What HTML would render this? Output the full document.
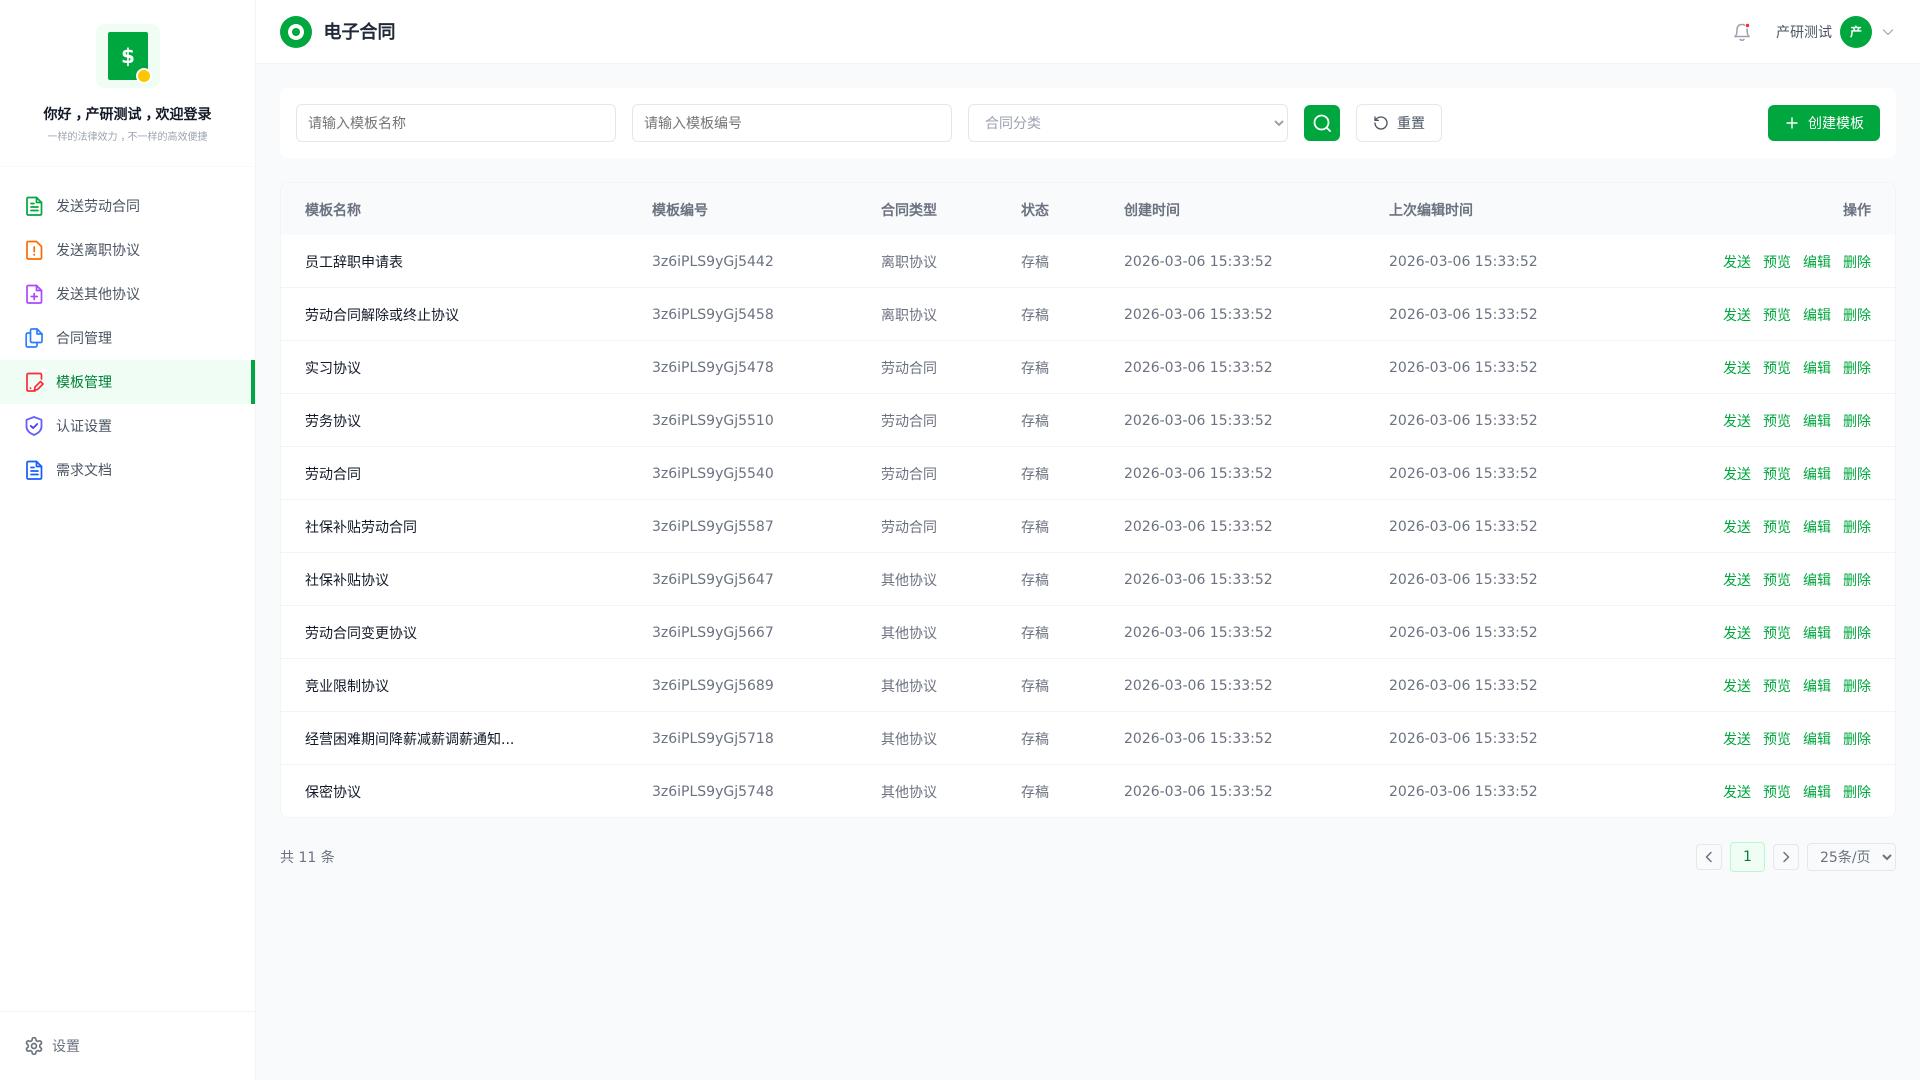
<!DOCTYPE html>
<html><head><meta charset="utf-8"><title>电子合同</title>
<style>
*{box-sizing:border-box;margin:0;padding:0}
html,body{width:1920px;height:1080px;overflow:hidden;background:#f9fafb;font-family:"DejaVu Sans","WenQuanYi Zen Hei",sans-serif;font-size:14px;color:#1f2937}
#side{position:absolute;left:0;top:0;width:256px;height:1080px;background:#fff;border-right:1px solid #f3f4f6;overflow:hidden}
.tile{position:absolute;left:96px;top:24px;width:64px;height:64px;border-radius:8px;background:#f0fdf4}
.doc{position:absolute;left:12px;top:8px;width:40px;height:48px;border-radius:2px;background:#00a63e;color:#fff;font-size:20px;font-weight:700;line-height:48px;text-align:center}
.coin{position:absolute;left:40px;top:44px;width:16px;height:16px;border-radius:50%;background:#fdc700;border:2px solid #fff}
.hi{position:absolute;left:0;width:255px;top:105px;text-align:center;font-weight:700;line-height:20px;color:#111827}
.hi span{position:relative;left:4px}
.sub{position:absolute;left:0;width:255px;top:130px;text-align:center;font-size:10px;line-height:16px;color:#9ca3af}
.sub span{position:relative;left:3px}
.sl{position:absolute;left:0;width:255px;top:166px;height:1px;background:#f9fafb}
.mi{position:absolute;left:0;width:255px;height:44px;padding-top:1px;line-height:44px;padding-left:56px;color:#4b5563;overflow:hidden}
.mi svg{position:absolute;left:24px;top:11px}
.mi.on{background:#f0fdf4;color:#008236;border-right:4px solid #00a63e;overflow:visible}
.set{position:absolute;left:0;top:1011px;width:255px;height:69px;border-top:1px solid #f3f4f6;color:#6b7280;padding:2px 0 0 52px;line-height:66px}
.set svg{position:absolute;left:24px;top:24px}
#top{position:absolute;left:256px;top:0;width:1664px;height:64px;background:#fff;border-bottom:1px solid #f3f4f6}
.lg{position:absolute;left:24px;top:16px;width:32px;height:32px;border-radius:50%;background:#00a63e}
.lg i{position:absolute;left:8px;top:8px;width:16px;height:16px;border-radius:50%;background:#fff}
.lg b{position:absolute;left:12px;top:12px;width:8px;height:8px;border-radius:50%;background:#00a63e}
.ttl{position:absolute;left:67.500px;top:19px;font-size:18px;font-weight:700;line-height:28px;color:#1f2937}
.usr{position:absolute;left:1520px;top:23px;line-height:20px;color:#4b5563}
.av{position:absolute;left:1584px;top:16px;width:32px;height:32px;border-radius:50%;background:#00a63e;color:#fff;font-size:12px;font-weight:700;line-height:32px;text-align:center}
.card{position:absolute;left:280px;top:88px;width:1616px;height:70px;background:#fff;border-radius:8px}
input,select{position:absolute;top:16px;height:38px;background:#fff;border:1px solid #e5e7eb;border-radius:6px;font:14px "DejaVu Sans","WenQuanYi Zen Hei",sans-serif;outline:0}
input{padding:2px 12px 0 11px;width:320px;color:#1f2937}
input::placeholder{color:#757575;opacity:1}
select{width:320px;padding:2px 0 0 12px;color:#9ca3af}
.sb{position:absolute;left:1024px;top:17px;width:36px;height:36px;border-radius:6px;background:#00a63e}
.sb svg{position:absolute;left:8px;top:8px}
.rs{position:absolute;left:1076px;top:16px;width:86px;height:38px;border:1px solid #e5e7eb;border-radius:6px;background:#fff;color:#4b5563;line-height:36px;padding:1px 0 0 40px}
.rs svg{position:absolute;left:16px;top:10px}
.cr{position:absolute;left:1488px;top:17px;width:112px;height:36px;border-radius:6px;background:#00a63e;color:#fff;line-height:36px;padding:1px 0 0 40px}
.cr svg{position:absolute;left:16px;top:10px}
.tw{position:absolute;left:280px;top:182px;width:1616px;height:636px;background:#fff;border:1px solid #f3f4f6;border-radius:8px;overflow:hidden}
table{width:1614px;border-collapse:separate;border-spacing:0;table-layout:fixed}
th{height:52px;background:#f9fafb;color:#6b7280;font-weight:700;text-align:left;padding:1px 24px 0}
td{height:53px;padding:2px 24px 0;color:#6b7280;border-bottom:1px solid #f3f4f6;white-space:nowrap}
tr:last-child td{border-bottom:0;padding-top:1px}
td:first-child{color:#111827}
.d{color:#6b7280}
.op{text-align:right;color:#00a63e}
.op span{margin-left:12px}
th:last-child{text-align:right}
.tot{position:absolute;left:280px;top:848px;line-height:20px;color:#6b7280}
.pb{position:absolute;top:844px;width:26px;height:26px;border:1px solid #e5e7eb;border-radius:4px;background:#f9fafb}
.pb svg{position:absolute;left:5px;top:5px}
.pc{position:absolute;left:1730px;top:842px;width:35px;height:30px;border:1px solid #b9f8cf;border-radius:4px;background:#f0fdf4;color:#008236;line-height:28px;text-align:center}
select.ps{left:1807px;top:843px;width:89px;height:28px;padding:1px 0 0 8px;color:#6b7280;background:#f9fafb;border-radius:4px}
</style></head><body>
<div id="side">
<div class="tile"><div class="doc">$</div><div class="coin"></div></div>
<div class="hi">你好<span>，</span>产研测试<span>，</span>欢迎登录</div>
<div class="sub">一样的法律效力<span>，</span>不一样的高效便捷</div>
<div class="sl"></div>
<div class="mi" style="top:184px"><svg width="20" height="22" viewBox="0 0 20 22" fill="none" stroke="#00a63e" stroke-width="1.7" stroke-linejoin="round" stroke-linecap="round"><path d="M4.500 2.500H12.500L17.500 7.500V18.500Q17.500 20 16 20H4.500Q3 20 3 18.500V4Q3 2.500 4.500 2.500Z"/><path d="M12.500 2.500V7.500H17.500"/><path d="M7 8.500H10M7 12H14M7 15.500H14"/></svg>发送劳动合同</div>
<div class="mi" style="top:228px"><svg width="20" height="22" viewBox="0 0 20 22" fill="none" stroke="#ff6900" stroke-width="1.7" stroke-linejoin="round" stroke-linecap="round"><path d="M4.500 2.500H12.500L17.500 7.500V18.500Q17.500 20 16 20H4.500Q3 20 3 18.500V4Q3 2.500 4.500 2.500Z"/><path d="M10.200 8V12.500M10.200 15.500V16"/></svg>发送离职协议</div>
<div class="mi" style="top:272px"><svg width="20" height="22" viewBox="0 0 20 22" fill="none" stroke="#ad46ff" stroke-width="1.7" stroke-linejoin="round" stroke-linecap="round"><path d="M4.500 2.500H12.500L17.500 7.500V18.500Q17.500 20 16 20H4.500Q3 20 3 18.500V4Q3 2.500 4.500 2.500Z"/><path d="M12.500 2.500V7.500H17.500"/><path d="M10.200 10.500V16.500M7.200 13.500H13.200"/></svg>发送其他协议</div>
<div class="mi" style="top:316px"><svg width="20" height="22" viewBox="0 0 20 22" fill="none" stroke="#2b7fff" stroke-width="1.7" stroke-linejoin="round" stroke-linecap="round"><path d="M8 2H13L18 7V14Q18 15.500 16.500 15.500H8Q6.500 15.500 6.500 14V3.500Q6.500 2 8 2Z"/><path d="M13 2V7H18"/><path d="M6.500 6H4Q2.200 6 2.200 8V18.500Q2.200 20 4 20H11Q13 20 13 18V15.500"/></svg>合同管理</div>
<div class="mi on" style="top:360px"><svg width="20" height="22" viewBox="0 0 20 22" fill="none" stroke="#fb2c36" stroke-width="1.7" stroke-linejoin="round" stroke-linecap="round"><path d="M11 20H4.500Q3 20 3 18.500V4Q3 2.500 4.500 2.500H16Q17.500 2.500 17.500 4V8"/><path d="M6.500 17V17.200"/><path d="M10.500 19.500L11 16L16.500 10.500L19 13L13.500 18.500Z"/></svg><svg width="10" height="10" viewBox="0 0 10 10" style="left:38px;top:6px"><path d="M5 0L6.300 3.700L10 5L6.300 6.300L5 10L3.700 6.300L0 5L3.700 3.700Z" fill="#fff"/></svg>模板管理</div>
<div class="mi" style="top:404px"><svg width="20" height="22" viewBox="0 0 20 22" fill="none" stroke="#615fff" stroke-width="1.8" stroke-linejoin="round" stroke-linecap="round"><path d="M10 2L17.500 4.800V11.500Q17.500 16.800 10 20Q2.500 16.800 2.500 11.500V4.800Z"/><path d="M6.800 11L9.200 13L13.200 9" stroke="#4f39f6"/></svg>认证设置</div>
<div class="mi" style="top:448px"><svg width="20" height="22" viewBox="0 0 20 22" fill="none" stroke="#155dfc" stroke-width="1.7" stroke-linejoin="round" stroke-linecap="round"><path d="M4.500 2.500H12.500L17.500 7.500V18.500Q17.500 20 16 20H4.500Q3 20 3 18.500V4Q3 2.500 4.500 2.500Z"/><path d="M12.500 2.500V7.500H17.500"/><path d="M7 8.500H10M7 12H14M7 15.500H14"/></svg>需求文档</div>
<div class="set"><svg width="20" height="20" viewBox="0 0 24 24" fill="none" stroke="#6b7280" stroke-width="2" stroke-linejoin="round" stroke-linecap="round"><path d="M12.220 2h-.44a2 2 0 0 0-2 2v.18a2 2 0 0 1-1 1.730l-.43.25a2 2 0 0 1-2 0l-.15-.08a2 2 0 0 0-2.730.73l-.22.38a2 2 0 0 0 .73 2.730l.15.1a2 2 0 0 1 1 1.720v.51a2 2 0 0 1-1 1.740l-.15.09a2 2 0 0 0-.73 2.730l.22.38a2 2 0 0 0 2.730.73l.15-.08a2 2 0 0 1 2 0l.43.25a2 2 0 0 1 1 1.730V20a2 2 0 0 0 2 2h.44a2 2 0 0 0 2-2v-.18a2 2 0 0 1 1-1.730l.43-.25a2 2 0 0 1 2 0l.15.08a2 2 0 0 0 2.730-.73l.22-.39a2 2 0 0 0-.73-2.730l-.15-.08a2 2 0 0 1-1-1.740v-.5a2 2 0 0 1 1-1.740l.15-.09a2 2 0 0 0 .73-2.730l-.22-.38a2 2 0 0 0-2.730-.73l-.15.08a2 2 0 0 1-2 0l-.43-.25a2 2 0 0 1-1-1.730V4a2 2 0 0 0-2-2z"/><circle cx="12" cy="12" r="3"/></svg>设置</div>
</div>
<div id="top">
<div class="lg"><i></i><b></b></div><div class="ttl">电子合同</div>
<svg style="position:absolute;left:1475px;top:21px" width="22" height="22" viewBox="0 0 22 22" fill="none" stroke="#9ca3af" stroke-width="1.500" stroke-linecap="round" stroke-linejoin="round"><path d="M4 15.500Q6 14 6 9Q6 3.500 11 3.500Q12.500 3.500 13.500 4M16 8Q16 14 18 15.500"/><path d="M4 15.500H18"/><path d="M9 18.500Q11 20 13 18.500"/><circle cx="16.500" cy="4.500" r="1.700" fill="#fb2c36" stroke="none"/></svg>
<div class="usr">产研测试</div><div class="av">产</div>
<svg style="position:absolute;left:1626px;top:26px" width="12" height="12" viewBox="0 0 12 12" fill="none" stroke="#9ca3af" stroke-width="1.200" stroke-linecap="round" stroke-linejoin="round"><path d="M1.500 4L6 8.500L10.500 4"/></svg>
</div>
<div class="card">
<input style="left:16px" placeholder="请输入模板名称">
<input style="left:352px" placeholder="请输入模板编号">
<select style="left:688px"><option>合同分类</option></select>
<div class="sb"><svg width="20" height="20" viewBox="0 0 20 20" fill="none" stroke="#fff" stroke-width="1.800" stroke-linecap="round"><circle cx="9.500" cy="9.500" r="7"/><path d="M14.500 14.500L18 18"/></svg></div>
<div class="rs"><svg width="16" height="16" viewBox="0 0 24 24" fill="none" stroke="#4b5563" stroke-width="2" stroke-linecap="round" stroke-linejoin="round"><path d="M3 12a9 9 0 1 0 9-9 9.750 9.750 0 0 0-6.740 2.740L3 8"/><path d="M3 3v5h5"/></svg>重置</div>
<div class="cr"><svg width="16" height="16" viewBox="0 0 16 16" fill="none" stroke="#fff" stroke-width="1.400" stroke-linecap="round"><path d="M8 3V13M3 8H13"/></svg>创建模板</div>
</div>
<div class="tw"><table>
<colgroup><col style="width:347px"><col style="width:229px"><col style="width:140px"><col style="width:103px"><col style="width:265px"><col style="width:300px"><col style="width:230px"></colgroup>
<thead><tr><th>模板名称</th><th>模板编号</th><th>合同类型</th><th>状态</th><th>创建时间</th><th>上次编辑时间</th><th>操作</th></tr></thead>
<tbody>
<tr><td>员工辞职申请表</td><td>3z6iPLS9yGj5442</td><td>离职协议</td><td>存稿</td><td class="d">2026-03-06 15:33:52</td><td class="d">2026-03-06 15:33:52</td><td class="op"><span>发送</span><span>预览</span><span>编辑</span><span>删除</span></td></tr>
<tr><td>劳动合同解除或终止协议</td><td>3z6iPLS9yGj5458</td><td>离职协议</td><td>存稿</td><td class="d">2026-03-06 15:33:52</td><td class="d">2026-03-06 15:33:52</td><td class="op"><span>发送</span><span>预览</span><span>编辑</span><span>删除</span></td></tr>
<tr><td>实习协议</td><td>3z6iPLS9yGj5478</td><td>劳动合同</td><td>存稿</td><td class="d">2026-03-06 15:33:52</td><td class="d">2026-03-06 15:33:52</td><td class="op"><span>发送</span><span>预览</span><span>编辑</span><span>删除</span></td></tr>
<tr><td>劳务协议</td><td>3z6iPLS9yGj5510</td><td>劳动合同</td><td>存稿</td><td class="d">2026-03-06 15:33:52</td><td class="d">2026-03-06 15:33:52</td><td class="op"><span>发送</span><span>预览</span><span>编辑</span><span>删除</span></td></tr>
<tr><td>劳动合同</td><td>3z6iPLS9yGj5540</td><td>劳动合同</td><td>存稿</td><td class="d">2026-03-06 15:33:52</td><td class="d">2026-03-06 15:33:52</td><td class="op"><span>发送</span><span>预览</span><span>编辑</span><span>删除</span></td></tr>
<tr><td>社保补贴劳动合同</td><td>3z6iPLS9yGj5587</td><td>劳动合同</td><td>存稿</td><td class="d">2026-03-06 15:33:52</td><td class="d">2026-03-06 15:33:52</td><td class="op"><span>发送</span><span>预览</span><span>编辑</span><span>删除</span></td></tr>
<tr><td>社保补贴协议</td><td>3z6iPLS9yGj5647</td><td>其他协议</td><td>存稿</td><td class="d">2026-03-06 15:33:52</td><td class="d">2026-03-06 15:33:52</td><td class="op"><span>发送</span><span>预览</span><span>编辑</span><span>删除</span></td></tr>
<tr><td>劳动合同变更协议</td><td>3z6iPLS9yGj5667</td><td>其他协议</td><td>存稿</td><td class="d">2026-03-06 15:33:52</td><td class="d">2026-03-06 15:33:52</td><td class="op"><span>发送</span><span>预览</span><span>编辑</span><span>删除</span></td></tr>
<tr><td>竞业限制协议</td><td>3z6iPLS9yGj5689</td><td>其他协议</td><td>存稿</td><td class="d">2026-03-06 15:33:52</td><td class="d">2026-03-06 15:33:52</td><td class="op"><span>发送</span><span>预览</span><span>编辑</span><span>删除</span></td></tr>
<tr><td>经营困难期间降薪减薪调薪通知...</td><td>3z6iPLS9yGj5718</td><td>其他协议</td><td>存稿</td><td class="d">2026-03-06 15:33:52</td><td class="d">2026-03-06 15:33:52</td><td class="op"><span>发送</span><span>预览</span><span>编辑</span><span>删除</span></td></tr>
<tr><td>保密协议</td><td>3z6iPLS9yGj5748</td><td>其他协议</td><td>存稿</td><td class="d">2026-03-06 15:33:52</td><td class="d">2026-03-06 15:33:52</td><td class="op"><span>发送</span><span>预览</span><span>编辑</span><span>删除</span></td></tr>
</tbody></table></div>
<div class="tot">共 11 条</div>
<div class="pb" style="left:1696px"><svg width="14" height="14" viewBox="0 0 14 14" fill="none" stroke="#6b7280" stroke-width="1.500" stroke-linecap="round" stroke-linejoin="round"><path d="M9 2.500L4.500 7L9 11.500"/></svg></div>
<div class="pc">1</div>
<div class="pb" style="left:1773px"><svg width="14" height="14" viewBox="0 0 14 14" fill="none" stroke="#6b7280" stroke-width="1.500" stroke-linecap="round" stroke-linejoin="round"><path d="M5 2.500L9.500 7L5 11.500"/></svg></div>
<select class="ps"><option>25条/页</option></select>
</body></html>
